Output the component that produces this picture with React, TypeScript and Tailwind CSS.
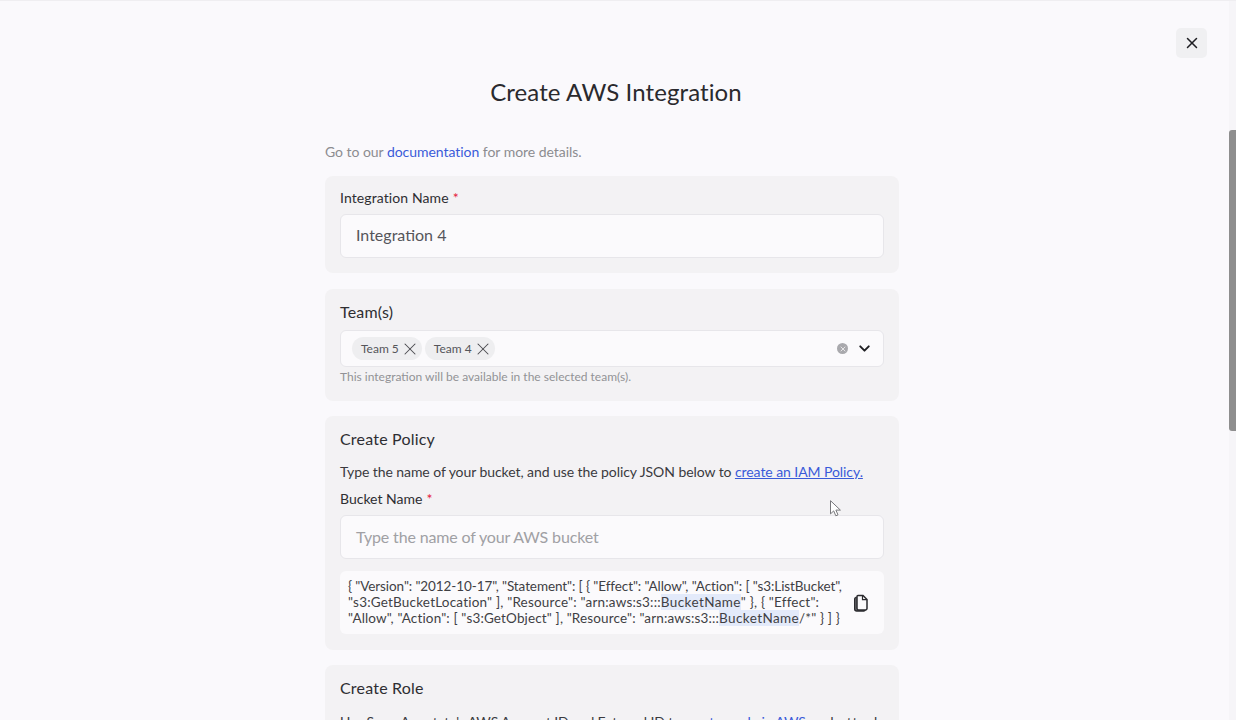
import { ChevronDown, X } from "lucide-react";

const FONT = "font-['Lato','Noto_Sans',sans-serif]";

function Required() {
  return <span className="ml-[4px] text-[#e5213d]">*</span>;
}

function Tag({ label }: { label: string }) {
  return (
    <span className="flex h-[23px] items-center gap-[1px] rounded-full bg-[#eeeef0] pl-[9px] pr-[2px] text-[12px] text-[#55555a]">
      {label}
      <X size={20} strokeWidth={1.25} className="text-[#4b4b50]" />
    </span>
  );
}

function Highlight({ children }: { children: string }) {
  return <span className="bg-[#e3eafa] tracking-[0.4px]">{children}</span>;
}

export default function App() {
  return (
    <div className={`relative h-[720px] overflow-hidden border-t border-[#efeef1] bg-[#faf9fc] ${FONT} text-[#2e2e32]`}>
      <button className="absolute right-[29px] top-[27px] flex h-[30px] w-[31px] items-center justify-center rounded-[5px] bg-[#f0f0f2]">
        <X size={18} strokeWidth={2} className="text-[#1f1f23]" />
      </button>

      {/* scrollbar */}
      <div className="absolute bottom-0 right-0 top-0 w-[7px] bg-[#f6f5f8]">
        <div className="mt-[129px] h-[301px] w-[7px] rounded-l-[3px] bg-[#8e8e8e]" />
      </div>

      <div className="mx-auto w-[574px] -translate-x-[6px] pt-[75px]">
        <h1 className="ml-[8px] text-center text-[24px] leading-[31px] tracking-[0.1px] text-[#2a2a2e]">
          Create AWS Integration
        </h1>

        <p className="mt-[35px] text-[14px] leading-[20px] tracking-[-0.04px] text-[#8c8c90]">
          Go to our <a className="text-[#3a5bd9]">documentation</a> for more details.
        </p>

        <section className="mt-[14px] h-[97px] rounded-[8px] bg-[#f3f2f4] px-[15px] pt-[12px]">
          <label className="block text-[14px] leading-[19px] tracking-[0.1px]">
            Integration Name
            <Required />
          </label>
          <div className="mt-[7px] flex h-[44px] items-center rounded-[6px] border border-[#e7e6ea] bg-[#fbfafc] px-[15px] pb-[2px] text-[16px] text-[#55555a]">
            Integration 4
          </div>
        </section>

        <section className="mt-[16px] h-[112px] rounded-[8px] bg-[#f3f2f4] px-[15px] pt-[13px]">
          <label className="block text-[16px] leading-[20px] tracking-[0.2px]">Team(s)</label>
          <div className="mt-[8px] flex h-[37px] items-center gap-[3px] rounded-[6px] border border-[#e7e6ea] bg-[#fbfafc] pl-[11px] pr-[10px]">
            <Tag label="Team 5" />
            <Tag label="Team 4" />
            <span className="ml-auto flex h-[11px] w-[11px] items-center justify-center rounded-full bg-[#a9a9ad]">
              <X size={8} strokeWidth={2.5} className="text-[#f3f2f4]" />
            </span>
            <ChevronDown size={17} strokeWidth={2.75} className="ml-[5px] text-[#1f1f23]" />
          </div>
          <p className="mt-[2px] text-[12px] leading-[16px] text-[#929296]">
            This integration will be available in the selected team(s).
          </p>
        </section>

        <section className="mt-[15px] h-[234px] rounded-[8px] bg-[#f3f2f4] px-[15px] pt-[13px]">
          <h2 className="text-[16px] leading-[20px] tracking-[0.2px]">Create Policy</h2>
          <p className="mt-[13px] text-[14px] leading-[20px] tracking-[-0.07px] text-[#3a3a3e]">
            Type the name of your bucket, and use the policy JSON below to{" "}
            <a className="text-[#3a5bd9] underline">create an IAM Policy.</a>
          </p>
          <label className="mt-[7px] block text-[14px] leading-[19px]">
            Bucket Name
            <Required />
          </label>
          <div className="mt-[7px] flex h-[44px] items-center rounded-[6px] border border-[#e7e6ea] bg-[#fbfafc] px-[15px] text-[16px] tracking-[-0.15px] text-[#a0a0a4]">
            Type the name of your AWS bucket
          </div>
          <div className="mt-[12px] flex h-[63px] items-center rounded-[6px] bg-[#fbfafc] pb-[1px] pl-[8px] pr-[15px]">
            <p className="whitespace-nowrap text-[13.5px] leading-[16px] tracking-[0.2px] text-[#3f3f44]">
              <span className="block tracking-[-0.09px]">
                {'{ "Version": "2012-10-17", "Statement": [ { "Effect": "Allow", "Action": [ "s3:ListBucket",'}
              </span>
              <span className="block">
                {'"s3:GetBucketLocation" ], "Resource": "arn:aws:s3:::'}
                <Highlight>BucketName</Highlight>
                {'" }, { "Effect":'}
              </span>
              <span className="block tracking-[0.15px]">
                {'"Allow", "Action": [ "s3:GetObject" ], "Resource": "arn:aws:s3:::'}
                <Highlight>BucketName</Highlight>
                {'/*" } ] }'}
              </span>
            </p>
            <svg width="16" height="18" viewBox="0 0 16 18" fill="none" className="ml-auto mt-[1px] text-[#2a2a2e]">
              <path d="M3.6 3.2 2.6 3.7A1.4 1.4 0 0 0 1.7 5v10a2 2 0 0 0 2 2h7a1.5 1.5 0 0 0 1.5-1" stroke="currentColor" strokeWidth="1.4" fill="#77777b" />
              <path d="M5 1.5h5l4 4v9a1.5 1.5 0 0 1-1.5 1.5h-7A1.5 1.5 0 0 1 4 14.5V2.5a1 1 0 0 1 1-1z" fill="#fbfafc" stroke="currentColor" strokeWidth="1.5" />
              <path d="M9.5 1.5v4.2H14" stroke="currentColor" strokeWidth="1.2" />
            </svg>
          </div>
        </section>

        <section className="mt-[15px] rounded-[8px] bg-[#f3f2f4] px-[15px] pb-[20px] pt-[13px]">
          <h2 className="text-[16px] leading-[20px] tracking-[0.2px]">Create Role</h2>
          <p className="mt-[14px] whitespace-nowrap text-[14px] leading-[20px] tracking-[-0.15px] text-[#3a3a3e]">
            Use SuperAnnotate's AWS Account ID and External ID to{" "}
            <a className="text-[#3a5bd9] underline">create a role in AWS</a>{" "}
            <span className="tracking-[0.9px]">and attach</span>
          </p>
        </section>
      </div>

      {/* mouse pointer */}
      <svg width="12" height="17" viewBox="0 0 12 17" className="absolute left-[830px] top-[499px]">
        <path d="M.5.7v13.2l3.2-3 2.1 4.9 2.2-.9-2.1-4.8h4.5z" fill="#fff" stroke="#77777b" strokeWidth="1" />
      </svg>
    </div>
  );
}
